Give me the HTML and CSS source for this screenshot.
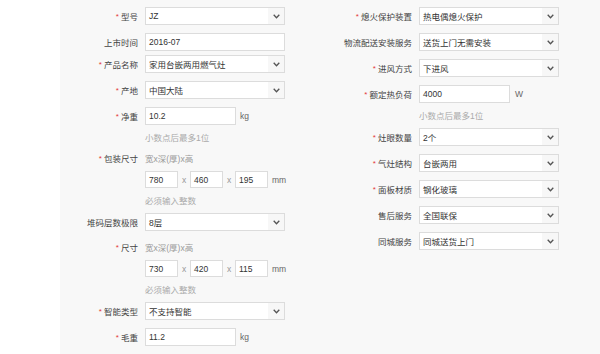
FILE: index.html
```html
<!DOCTYPE html>
<html lang="zh-CN">
<head>
<meta charset="utf-8">
<title>商品属性</title>
<link rel="stylesheet" href="styles.css">
</head>
<body>
<div class="page">
  <div class="gutter"></div>
  <div class="panel">
    <div class="col col-left">
      <div class="row"><span class="label"><i class="req">*</i>型号</span><div class="select"><span class="val">JZ</span><span class="arrow"><svg width="7" height="5" viewBox="0 0 7 5"><path d="M0.7 0.8 L3.5 3.8 L6.3 0.8" fill="none" stroke="#555" stroke-width="1.3"/></svg></span></div></div>
      <div class="row row-tight"><span class="label">上市时间</span><div class="input input-wide">2016-07</div></div>
      <div class="row"><span class="label"><i class="req">*</i>产品名称</span><div class="select"><span class="val">家用台嵌两用燃气灶</span><span class="arrow"><svg width="7" height="5" viewBox="0 0 7 5"><path d="M0.7 0.8 L3.5 3.8 L6.3 0.8" fill="none" stroke="#555" stroke-width="1.3"/></svg></span></div></div>
      <div class="row"><span class="label"><i class="req">*</i>产地</span><div class="select"><span class="val">中国大陆</span><span class="arrow"><svg width="7" height="5" viewBox="0 0 7 5"><path d="M0.7 0.8 L3.5 3.8 L6.3 0.8" fill="none" stroke="#555" stroke-width="1.3"/></svg></span></div></div>
      <div class="row row-hinted"><span class="label"><i class="req">*</i>净重</span><div class="input">10.2</div><span class="unit">kg</span></div>
      <div class="hint">小数点后最多1位</div>

      <div class="dim">
        <div class="dim-head"><span class="label"><i class="req">*</i>包装尺寸</span><span class="dim-caption">宽x深(厚)x高</span></div>
        <div class="dim-inputs"><div class="input input-dim">780</div><span class="times">x</span><div class="input input-dim">460</div><span class="times">x</span><div class="input input-dim">195</div><span class="unit">mm</span></div>
        <div class="hint">必须输入整数</div>
      </div>

      <div class="row"><span class="label">堆码层数极限</span><div class="select"><span class="val">8层</span><span class="arrow"><svg width="7" height="5" viewBox="0 0 7 5"><path d="M0.7 0.8 L3.5 3.8 L6.3 0.8" fill="none" stroke="#555" stroke-width="1.3"/></svg></span></div></div>

      <div class="dim">
        <div class="dim-head"><span class="label"><i class="req">*</i>尺寸</span><span class="dim-caption">宽x深(厚)x高</span></div>
        <div class="dim-inputs"><div class="input input-dim">730</div><span class="times">x</span><div class="input input-dim">420</div><span class="times">x</span><div class="input input-dim">115</div><span class="unit">mm</span></div>
        <div class="hint">必须输入整数</div>
      </div>

      <div class="row"><span class="label"><i class="req">*</i>智能类型</span><div class="select"><span class="val">不支持智能</span><span class="arrow"><svg width="7" height="5" viewBox="0 0 7 5"><path d="M0.7 0.8 L3.5 3.8 L6.3 0.8" fill="none" stroke="#555" stroke-width="1.3"/></svg></span></div></div>
      <div class="row"><span class="label"><i class="req">*</i>毛重</span><div class="input">11.2</div><span class="unit">kg</span></div>
    </div>

    <div class="col col-right">
      <div class="row"><span class="label"><i class="req">*</i>熄火保护装置</span><div class="select"><span class="val">热电偶熄火保护</span><span class="arrow"><svg width="7" height="5" viewBox="0 0 7 5"><path d="M0.7 0.8 L3.5 3.8 L6.3 0.8" fill="none" stroke="#555" stroke-width="1.3"/></svg></span></div></div>
      <div class="row"><span class="label">物流配送安装服务</span><div class="select"><span class="val">送货上门无需安装</span><span class="arrow"><svg width="7" height="5" viewBox="0 0 7 5"><path d="M0.7 0.8 L3.5 3.8 L6.3 0.8" fill="none" stroke="#555" stroke-width="1.3"/></svg></span></div></div>
      <div class="row"><span class="label"><i class="req">*</i>进风方式</span><div class="select"><span class="val">下进风</span><span class="arrow"><svg width="7" height="5" viewBox="0 0 7 5"><path d="M0.7 0.8 L3.5 3.8 L6.3 0.8" fill="none" stroke="#555" stroke-width="1.3"/></svg></span></div></div>
      <div class="row row-hinted"><span class="label"><i class="req">*</i>额定热负荷</span><div class="input">4000</div><span class="unit unit-w">W</span></div>
      <div class="hint">小数点后最多1位</div>
      <div class="row"><span class="label"><i class="req">*</i>灶眼数量</span><div class="select"><span class="val">2个</span><span class="arrow"><svg width="7" height="5" viewBox="0 0 7 5"><path d="M0.7 0.8 L3.5 3.8 L6.3 0.8" fill="none" stroke="#555" stroke-width="1.3"/></svg></span></div></div>
      <div class="row"><span class="label"><i class="req">*</i>气灶结构</span><div class="select"><span class="val">台嵌两用</span><span class="arrow"><svg width="7" height="5" viewBox="0 0 7 5"><path d="M0.7 0.8 L3.5 3.8 L6.3 0.8" fill="none" stroke="#555" stroke-width="1.3"/></svg></span></div></div>
      <div class="row"><span class="label"><i class="req">*</i>面板材质</span><div class="select"><span class="val">钢化玻璃</span><span class="arrow"><svg width="7" height="5" viewBox="0 0 7 5"><path d="M0.7 0.8 L3.5 3.8 L6.3 0.8" fill="none" stroke="#555" stroke-width="1.3"/></svg></span></div></div>
      <div class="row"><span class="label">售后服务</span><div class="select"><span class="val">全国联保</span><span class="arrow"><svg width="7" height="5" viewBox="0 0 7 5"><path d="M0.7 0.8 L3.5 3.8 L6.3 0.8" fill="none" stroke="#555" stroke-width="1.3"/></svg></span></div></div>
      <div class="row"><span class="label">同城服务</span><div class="select"><span class="val">同城送货上门</span><span class="arrow"><svg width="7" height="5" viewBox="0 0 7 5"><path d="M0.7 0.8 L3.5 3.8 L6.3 0.8" fill="none" stroke="#555" stroke-width="1.3"/></svg></span></div></div>
    </div>
  </div>
</div>
</body>
</html>
```

FILE: styles.css
```css
html, body {
  margin: 0;
  padding: 0;
  background: #ffffff;
}

body {
  font-family: "Liberation Sans", "Noto Sans CJK SC", sans-serif;
  font-size: 8.5px;
  color: #333333;
}

.page {
  display: flex;
  width: 600px;
  height: 354px;
  overflow: hidden;
}

.gutter {
  width: 60px;
  flex: none;
  background: #ffffff;
}

.panel {
  flex: 1;
  display: flex;
  background: #f8f8f8;
  padding-top: 7px;
}

.col {
  display: flex;
  flex-direction: column;
}

.col-left {
  width: 240px;
  --lw: 78px;
}

.col-right {
  width: 300px;
  --lw: 112px;
}

.row {
  display: flex;
  align-items: center;
  height: 18px;
  margin-bottom: 8px;
}

.row-tight {
  margin-bottom: 4px;
}

.row-hinted {
  margin-bottom: 6px;
}

.label {
  flex: none;
  width: var(--lw);
  margin-right: 7px;
  text-align: right;
  color: #444444;
  white-space: nowrap;
}

.req {
  font-style: normal;
  color: #e4393c;
  font-size: 8px;
  margin-right: 2px;
  position: relative;
  top: -1px;
}

.select {
  box-sizing: border-box;
  width: 140px;
  height: 18px;
  display: flex;
  align-items: stretch;
  background: #ffffff;
  border: 1px solid #dcdcdc;
}

.select .val {
  flex: 1;
  display: flex;
  align-items: center;
  padding-left: 3px;
  white-space: nowrap;
  overflow: hidden;
}

.select .arrow {
  width: 16px;
  flex: none;
  display: flex;
  align-items: center;
  justify-content: center;
  background: #f7f7f7;
}

.select .arrow svg {
  display: block;
}

.input {
  box-sizing: border-box;
  width: 91px;
  height: 18px;
  display: flex;
  align-items: center;
  padding-left: 3px;
  background: #ffffff;
  border: 1px solid #dcdcdc;
  white-space: nowrap;
}

.input-wide {
  width: 140px;
}

.input-dim {
  width: 33px;
  height: 17px;
}

.unit {
  margin-left: 4px;
  color: #666666;
}

.unit-w {
  margin-left: 5px;
}

.hint {
  margin-left: calc(var(--lw) + 7px);
  height: 14px;
  line-height: 14px;
  margin-bottom: 5px;
  color: #aaaaaa;
  white-space: nowrap;
}

.dim {
  padding-top: 1px;
}

.dim-head {
  display: flex;
  align-items: center;
  height: 14px;
  margin-bottom: 6px;
}

.dim-caption {
  color: #999999;
}

.dim-inputs {
  display: flex;
  align-items: center;
  height: 17px;
  margin-left: calc(var(--lw) + 7px);
  margin-bottom: 6px;
}

.times {
  width: 12px;
  text-align: center;
  color: #999999;
}
```
